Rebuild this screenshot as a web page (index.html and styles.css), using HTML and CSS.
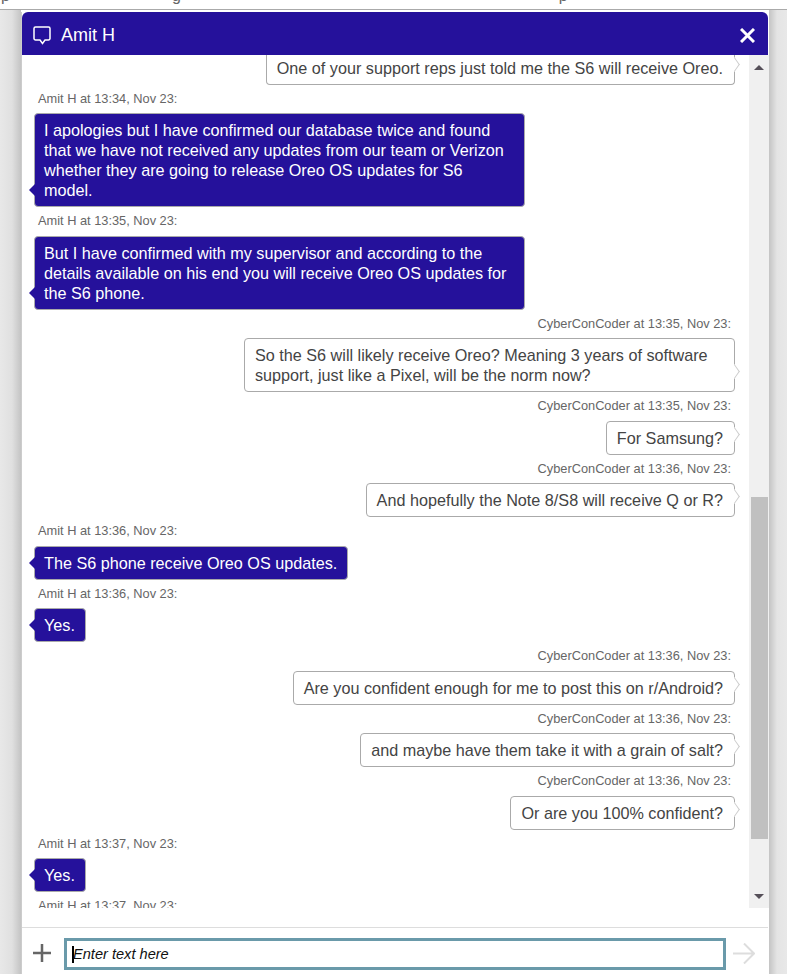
FILE: index.html
```html
<!DOCTYPE html>
<html lang="en">

<head>
    <meta charset="UTF-8">
    <title>Chat with Amit H</title>
    <link rel="stylesheet" href="styles.css">
</head>

<body>
    <div class="topstrip">
        <span class="cut-a">p</span>
        <span class="cut-b">g</span>
        <span class="cut-c">p</span>
    </div>
    <div class="backdrop">
        <div class="chat">
            <div class="chat-head">
                <svg class="head-icon" width="18" height="19" viewBox="0 0 18 19" fill="none" stroke="#fff" stroke-width="1.5">
                    <path d="M2.5 1h13a1.5 1.5 0 0 1 1.5 1.5v10a1.5 1.5 0 0 1-1.5 1.5h-3.5l-2.5 3.5-2.5-3.500h-4.500a1.500 1.500 0 0 1-1.500-1.500v-10a1.500 1.500 0 0 1 1.500-1.500z"/>
                </svg>
                <span class="head-title">Amit H</span>
                <svg class="head-close" width="15" height="15" viewBox="0 0 15 15" stroke="#fff" stroke-width="3">
                    <path d="M1 1l13 13M14 1l-13 13"/>
                </svg>
            </div>

            <div class="chat-body">
                <div class="messages">
                    <div class="bubble them first">One of your support reps just told me the S6 will receive Oreo.</div>

                    <div class="label">Amit H at 13:34, Nov 23:</div>
                    <div class="bubble agent">I apologies but I have confirmed our database twice and found that we have not received any updates from our team or Verizon whether they are going to release Oreo OS updates for S6 model.</div>

                    <div class="label">Amit H at 13:35, Nov 23:</div>
                    <div class="bubble agent">But I have confirmed with my supervisor and according to the details available on his end you will receive Oreo OS updates for the S6 phone.</div>

                    <div class="label right">CyberConCoder at 13:35, Nov 23:</div>
                    <div class="bubble them">So the S6 will likely receive Oreo? Meaning 3 years of software support, just like a Pixel, will be the norm now?</div>

                    <div class="label right">CyberConCoder at 13:35, Nov 23:</div>
                    <div class="bubble them">For Samsung?</div>

                    <div class="label right">CyberConCoder at 13:36, Nov 23:</div>
                    <div class="bubble them">And hopefully the Note 8/S8 will receive Q or R?</div>

                    <div class="label">Amit H at 13:36, Nov 23:</div>
                    <div class="bubble agent">The S6 phone receive Oreo OS updates.</div>

                    <div class="label">Amit H at 13:36, Nov 23:</div>
                    <div class="bubble agent">Yes.</div>

                    <div class="label right">CyberConCoder at 13:36, Nov 23:</div>
                    <div class="bubble them">Are you confident enough for me to post this on r/Android?</div>

                    <div class="label right">CyberConCoder at 13:36, Nov 23:</div>
                    <div class="bubble them">and maybe have them take it with a grain of salt?</div>

                    <div class="label right">CyberConCoder at 13:36, Nov 23:</div>
                    <div class="bubble them">Or are you 100% confident?</div>

                    <div class="label">Amit H at 13:37, Nov 23:</div>
                    <div class="bubble agent">Yes.</div>

                    <div class="label">Amit H at 13:37, Nov 23:</div>
                </div>

                <div class="scrollbar">
                    <div class="arrow up"></div>
                    <div class="thumb"></div>
                    <div class="arrow down"></div>
                </div>
            </div>

            <div class="chat-foot">
                <svg class="plus" width="18" height="18" viewBox="0 0 18 18" stroke="#666" stroke-width="2.5">
                    <path d="M0 9h18M9 0v18"/>
                </svg>
                <div class="entry"><span class="caret"></span>Enter text here</div>
                <svg class="send" width="22" height="21" viewBox="0 0 22 21" fill="none" stroke="#ddd" stroke-width="2">
                    <path d="M0 10.5h21M11 .5l10 10-10 10"/>
                </svg>
            </div>
        </div>
    </div>
</body>

</html>
```

FILE: styles.css
```css
html, body {
    margin: 0;
    padding: 0;
    height: 100%;
    overflow: hidden;
}

body {
    font-family: "Liberation Sans", Arial, sans-serif;
    background-color: #fff;
    display: flex;
    flex-direction: column;
}

/* page text behind the dialog, only the descenders show */
.topstrip {
    height: 9px;
    flex: none;
    overflow: hidden;
    background-color: #fff;
    border-bottom: 1px solid #aaa;
    display: flex;
    font-size: 16px;
    line-height: 16px;
    color: #666;
}

.topstrip span {
    margin-top: -12px;
}

.cut-a {
    margin-left: 1px;
}

.cut-b {
    margin-left: 162px;
}

.cut-c {
    margin-left: 378px;
}

.backdrop {
    flex: 1;
    min-height: 0;
    padding: 2px 19px 0 21px;
    background:
        linear-gradient(to right, #e8e8e8 0, #e0e0e0 12px, #c4c4c4 21px, transparent 21px),
        linear-gradient(to left, #e8e8e8 0, #e4e4e4 10px, #c4c4c4 18px, transparent 18px);
}

.chat {
    height: 100%;
    background-color: #fff;
    display: flex;
    flex-direction: column;
    box-sizing: border-box;
    border-left: 1px solid #ccc;
}

.chat-head {
    height: 43px;
    flex: none;
    box-sizing: border-box;
    background-color: #25119b;
    border-radius: 6px 6px 0 0;
    display: flex;
    align-items: center;
    padding: 4px 13px 0 11px;
}

.head-icon {
    margin-top: -1px;
}

.head-title {
    color: #fff;
    font-size: 18px;
    margin-left: 10px;
    flex: 1;
}

.chat-body {
    flex: none;
    height: 853px;
    display: flex;
}

.messages {
    flex: 1;
    min-width: 0;
    overflow: hidden;
    display: flex;
    flex-direction: column;
    align-items: flex-start;
    padding: 0 14px 0 12px;
}

.label {
    font-size: 12.8px;
    line-height: 14.5px;
    color: #666;
    margin: 7px 0;
    padding: 0 4px;
    flex: none;
}

.label.right {
    align-self: flex-end;
}

.bubble {
    position: relative;
    flex: none;
    box-sizing: border-box;
    max-width: 491px;
    font-size: 16.2px;
    line-height: 20px;
    border-radius: 4px;
}

.agent {
    background-color: #25119b;
    color: #fff;
    border: 1px solid #aaa;
    padding: 6px 10px 6px 9px;
}

.agent::before {
    content: "";
    position: absolute;
    left: -6px;
    bottom: 10px;
    border-top: 6px solid transparent;
    border-bottom: 6px solid transparent;
    border-right: 6px solid #25119b;
}

.them {
    align-self: flex-end;
    background-color: #fff;
    color: #444;
    border: 1px solid #aaa;
    padding: 6px 11px 6px 10px;
}

.them::after {
    content: "";
    position: absolute;
    right: -5px;
    bottom: 15px;
    width: 9px;
    height: 9px;
    box-sizing: border-box;
    background-color: #fff;
    border-top: 1px solid #ccc;
    border-right: 1px solid #ccc;
    transform: rotate(45deg) skew(10deg, 10deg);
}

.first {
    height: 29.6px;
    padding-top: 3px;
    border-top: none;
    border-radius: 0 0 4px 4px;
}

.scrollbar {
    width: 20px;
    flex: none;
    background-color: #f0f0f0;
    display: flex;
    flex-direction: column;
    align-items: center;
    margin-right: -1px;
}

.thumb {
    width: 17px;
    height: 342px;
    background-color: #c0c0c0;
    margin-top: 427px;
}

.arrow {
    width: 0;
    height: 0;
    border-left: 5px solid transparent;
    border-right: 5px solid transparent;
}

.arrow.up {
    border-bottom: 5px solid #554f58;
    margin-top: 10px;
}

.arrow.down {
    border-top: 5px solid #554f58;
    margin-top: 55px;
}

.chat-foot {
    flex: 1;
    min-height: 0;
    display: flex;
    align-items: flex-start;
    border-top: 1px solid #ddd;
    margin-top: 19px;
    padding: 10px 13px 0 11px;
}

.plus {
    margin-top: 6px;
}

.entry {
    box-sizing: border-box;
    width: 662px;
    height: 32px;
    margin-left: 13px;
    border: 3px solid #6a9aaa;
    padding-left: 5px;
    font-size: 14.6px;
    line-height: 26px;
    font-style: italic;
    color: #111;
    display: flex;
    align-items: center;
}

.caret {
    width: 2px;
    height: 17px;
    margin-right: -1px;
    background-color: #000;
}

.send {
    margin: 5px 0 0 7px;
}
```
